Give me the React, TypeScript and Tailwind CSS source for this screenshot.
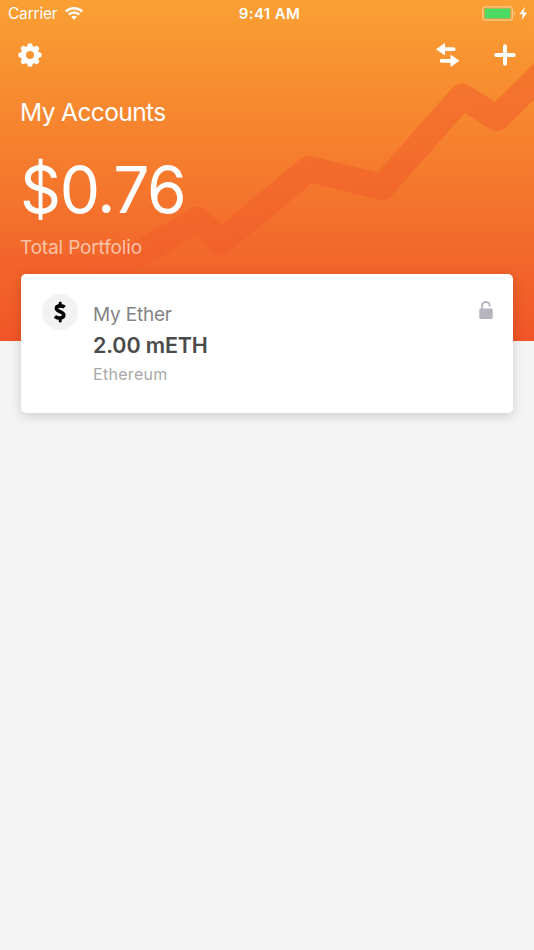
import type { ReactNode } from 'react'

const teeth = [0, 45, 90, 135, 180, 225, 270, 315]

const accounts = [{ name: 'My Ether', balance: '2.00 mETH', currency: 'Ethereum' }]

function StatusBar() {
  return (
    <div className="grid h-7 grid-cols-3 items-center pl-2 pr-[6px] text-[15.5px] leading-7">
      <div className="flex items-center gap-2">
        <span className="tracking-[-0.2px]">Carrier</span>
        <svg className="-mt-px h-[13px] w-[18px]" viewBox="0 0 18 13" fill="none" stroke="currentColor" strokeWidth="2.5">
          <path d="M.8 4.6C5.2.2 12.8.2 17.2 4.6" />
          <path d="M3.7 7.7C6.7 4.8 11.3 4.8 14.3 7.7" />
          <path d="M6.1 9.9Q9 7.4 11.9 9.9L9 12.8Z" fill="currentColor" stroke="none" />
        </svg>
      </div>
      <span className="pl-[3px] text-center text-[15px] font-semibold tracking-[0.4px]">9:41 AM</span>
      <div className="flex items-center justify-end">
        <svg className="-mt-0.5 h-[15px] w-[46px]" viewBox="0 0 46 15">
          <rect x="0.8" y="0.8" width="29.5" height="13.4" rx="2.5" fill="none" stroke="#fff" strokeOpacity=".45" strokeWidth="1.3" />
          <rect x="2.6" y="2.6" width="25.8" height="9.8" rx=".8" fill="#4cd964" />
          <path d="M31.8 5.2Q34.4 7.5 31.8 9.8Z" fill="#fff" fillOpacity=".5" />
          <path d="M43 .8 37.3 8.2h3.5l-1.2 6 5.6-7.7h-3.5Z" fill="#fff" />
        </svg>
      </div>
    </div>
  )
}

function GearIcon() {
  return (
    <svg className="size-6" viewBox="0 0 24 24">
      <circle cx="12" cy="12" r="6.6" fill="none" stroke="currentColor" strokeWidth="5.2" />
      {teeth.map((angle) => (
        <path
          key={angle}
          d="M8.8 4.5 9.7 1.4Q10.1.2 12 .2T14.3 1.4L15.2 4.5Z"
          fill="currentColor"
          transform={`rotate(${angle} 12 12)`}
        />
      ))}
    </svg>
  )
}

function TransferIcon() {
  return (
    <svg className="h-6 w-6" viewBox="0 0 24 24" fill="currentColor">
      <path d="M0 6.2 8.2.4Q9 0 9 1V4.3H17.7A1.9 1.9 0 0 1 17.7 8.1H9V11.4Q9 12.4 8.2 12Z" />
      <path d="M23.5 17.8 15.3 12Q14.5 11.6 14.5 12.6V15.9H5.6A1.9 1.9 0 0 0 5.6 19.7H14.5V23Q14.5 24 15.3 23.6Z" />
    </svg>
  )
}

function PlusIcon() {
  return (
    <svg className="size-[22px]" viewBox="0 0 22 22" stroke="currentColor" strokeWidth="4" strokeLinecap="round">
      <path d="M11 2.2V19.8M2.2 11H19.8" />
    </svg>
  )
}

function UnlockIcon() {
  return (
    <svg className="h-[19px] w-[14px] text-[#b5b5c0]" viewBox="0 0 14 19">
      <path d="M3.1 9V4.9a3.8 3.8 0 0 1 7.6-.3" fill="none" stroke="currentColor" strokeWidth="2" strokeLinecap="round" />
      <rect x=".3" y="7.6" width="13.4" height="10.4" rx="1.2" fill="currentColor" />
    </svg>
  )
}

function DollarIcon() {
  return (
    <svg className="h-[22px] w-3" viewBox="0 0 12 22" fill="none" stroke="#000" strokeWidth="3.6">
      <path d="M10.7 6.2C8.3 4.3 2.4 4.1 2.4 7.6 2.4 10.9 9.8 10.4 9.8 14.1 9.8 17.8 3.8 17.6.9 15.3" />
      <path d="M6.2 2V5M6.2 17V20" strokeLinecap="round" strokeWidth="3" />
    </svg>
  )
}

function IconButton({ label, children }: { label: string; children: ReactNode }) {
  return (
    <button aria-label={label} className="flex items-center justify-center">
      {children}
    </button>
  )
}

export default function App() {
  return (
    <div className="min-h-[950px] w-full overflow-hidden bg-[#f4f4f4] font-['Inter','Liberation_Sans',sans-serif]">
      <header className="relative h-[341px] bg-linear-to-b/srgb from-[#faa033] to-[#f05528] text-white">
        {/* Trend line */}
        <svg className="absolute inset-0 h-[341px] w-[534px]" viewBox="0 0 534 341" fill="none">
          <defs>
            <linearGradient id="trend" gradientUnits="userSpaceOnUse" x1="0" y1="0" x2="534" y2="0">
              <stop offset="0" stopColor="#f15a29" stopOpacity=".25" />
              <stop offset=".4" stopColor="#f15a29" stopOpacity=".45" />
              <stop offset="1" stopColor="#f15a29" stopOpacity=".5" />
            </linearGradient>
          </defs>
          <path
            d="M-20 258 110 271 198 219.5 221 242 308.5 169 382 187 462 96.5 497 118 560 56"
            stroke="url(#trend)"
            strokeWidth="26"
            strokeLinejoin="round"
          />
        </svg>

        <div className="relative">
          <StatusBar />

          <div className="flex items-center justify-between pl-[18px] pr-[18px] pt-[15px]">
            <IconButton label="Settings">
              <GearIcon />
            </IconButton>
            <div className="flex items-center gap-[34px]">
              <IconButton label="Transfer">
                <TransferIcon />
              </IconButton>
              <IconButton label="Add account">
                <PlusIcon />
              </IconButton>
            </div>
          </div>

          <div className="px-5">
            <h1 className="mt-[29px] text-[24.5px] leading-8 tracking-[-0.6px]">My Accounts</h1>
            <p className="mt-[26px] text-[64px] leading-[72px] tracking-[-1.4px]">$0.76</p>
            <p className="mt-[10px] text-[19px] leading-6 tracking-[-0.15px] text-white/60">Total Portfolio</p>
          </div>
        </div>
      </header>

      {/* Account cards */}
      <main className="relative -mt-[67px] px-[21px]">
        {accounts.map((account) => (
          <section
            key={account.name}
            className="flex h-[139px] rounded-[5px] bg-white pl-[21px] pr-5 shadow-[0_3px_12px_rgba(0,0,0,0.16)]"
          >
            <div className="mt-5 flex size-9 items-center justify-center rounded-full bg-[#f2f2f2]">
              <DollarIcon />
            </div>
            <div className="ml-[15px] mt-[28px] flex-1">
              <h2 className="text-[19px] leading-[26px] tracking-[-0.2px] text-[#848484]">{account.name}</h2>
              <p className="mt-[3px] text-[21.5px] font-semibold leading-7 tracking-[-0.15px] text-[#4a4a4a]">{account.balance}</p>
              <p className="mt-[4px] text-[16px] leading-[22px] tracking-[0.3px] text-[#a8a8a8]">{account.currency}</p>
            </div>
            <div className="mt-[27px]">
              <UnlockIcon />
            </div>
          </section>
        ))}
      </main>
    </div>
  )
}
